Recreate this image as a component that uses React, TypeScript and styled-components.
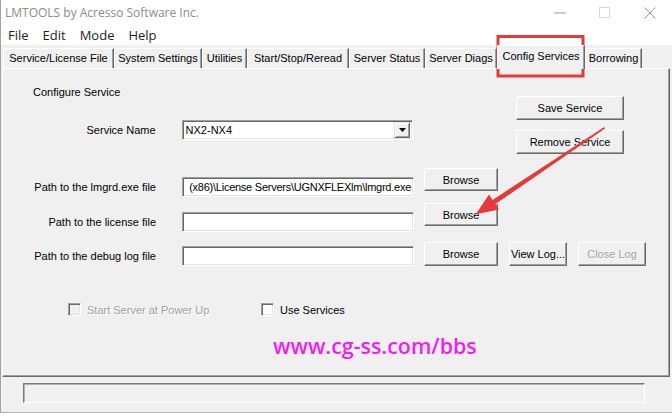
import styled, { createGlobalStyle, css } from "styled-components";

const GlobalStyle = createGlobalStyle`
  body {
    margin: 0;
    background: #ffffff;
    font-family: "Liberation Sans", Arial, sans-serif;
  }
`;

const Window = styled.div`
  position: relative;
  width: 672px;
  height: 413px;
  box-sizing: border-box;
  border-left: 1px solid #a3a3a3;
  border-bottom: 1px solid #b4b4b4;
  background: #f0f0f0;
  display: flex;
  flex-direction: column;
`;

const TitleBar = styled.div`
  height: 25px;
  background: #ffffff;
  display: flex;
  align-items: center;
  padding-left: 4px;
`;

const Title = styled.span`
  font-family: "Open Sans", sans-serif;
  font-size: 12px;
  color: #8c8c8c;
`;

const Controls = styled.div`
  margin-left: auto;
  display: flex;
  height: 100%;
`;

const CaptionButton = styled.div`
  width: 45px;
  height: 100%;
  display: flex;
  align-items: center;
  justify-content: center;
`;

const MenuBar = styled.div`
  height: 20px;
  background: #ffffff;
  display: flex;
`;

const MenuItem = styled.span`
  padding: 0 7px;
  font-family: "Open Sans", sans-serif;
  font-size: 13px;
  line-height: 20px;
  color: #1e1e1e;
`;

const TabStrip = styled.div`
  height: 23px;
  display: flex;
  align-items: flex-end;
  padding-left: 2px;
`;

const Tab = styled.div<{ $w: number; $active?: boolean }>`
  width: ${(p) => p.$w}px;
  height: 20px;
  box-sizing: border-box;
  border-top: 1px solid #ffffff;
  border-left: 1px solid #ffffff;
  border-right: 1px solid #696969;
  box-shadow: inset -1px 0 #a0a0a0;
  font-size: 11px;
  line-height: 19px;
  text-align: center;
  white-space: nowrap;
  color: #000;
  ${(p) =>
    p.$active &&
    css`
      height: 24px;
      margin-bottom: -1px;
      line-height: 21px;
      background: #f0f0f0;
      position: relative;
      z-index: 1;
    `}
`;

const Panel = styled.div`
  height: 309px;
  box-sizing: border-box;
  margin: 0 2px 0 1px;
  border-top: 1px solid #ffffff;
  border-left: 1px solid #ffffff;
  border-right: 1px solid #696969;
  border-bottom: 1px solid #696969;
  box-shadow: inset -1px -1px #a0a0a0;
  display: flex;
  flex-direction: column;
  font-size: 11px;
  color: #000;
`;

const TopSection = styled.div`
  display: flex;
  align-items: flex-start;
`;

const TopLeft = styled.div`
  width: 410px;
  display: flex;
  flex-direction: column;
`;

const GroupTitle = styled.div`
  margin: 16px 0 0 30px;
  line-height: 14px;
`;

const Row = styled.div<{ $top: number }>`
  display: flex;
  align-items: flex-start;
  margin-top: ${(p) => p.$top}px;
`;

const Label = styled.div<{ $offset?: number }>`
  width: 153px;
  text-align: right;
  line-height: 20px;
  margin-top: ${(p) => p.$offset ?? 0}px;
  white-space: nowrap;
`;

const sunken = css`
  box-sizing: border-box;
  border-top: 1px solid #a0a0a0;
  border-left: 1px solid #a0a0a0;
  border-bottom: 1px solid #ffffff;
  border-right: 1px solid #ffffff;
  box-shadow: inset 1px 1px #696969, inset -1px -1px #e3e3e3;
`;

const Field = styled.div<{ $offset?: number }>`
  ${sunken};
  width: 232px;
  height: 20px;
  margin-left: 26px;
  margin-top: ${(p) => p.$offset ?? 0}px;
  background: #ffffff;
  display: flex;
  justify-content: flex-end;
  align-items: center;
  overflow: hidden;
  white-space: nowrap;
  padding: 0 2px;
  line-height: 16px;
  letter-spacing: -0.25px;
`;

const Combo = styled(Field)`
  justify-content: flex-start;
  padding: 2px 2px 2px 3px;
  letter-spacing: 0;
`;

const ComboText = styled.span`
  flex: 1;
`;

const DropButton = styled.div`
  width: 16px;
  height: 16px;
  box-sizing: border-box;
  background: #f0f0f0;
  border-top: 1px solid #e3e3e3;
  border-left: 1px solid #e3e3e3;
  border-right: 1px solid #696969;
  border-bottom: 1px solid #696969;
  box-shadow: inset 1px 1px #fff, inset -1px -1px #a0a0a0;
  display: flex;
  align-items: center;
  justify-content: center;
`;

const Button = styled.div<{ $w: number; $h?: number; $gap?: number; $disabled?: boolean }>`
  width: ${(p) => p.$w}px;
  height: ${(p) => p.$h ?? 23}px;
  margin-left: ${(p) => p.$gap ?? 0}px;
  box-sizing: border-box;
  background: #f0f0f0;
  border-top: 1px solid #ffffff;
  border-left: 1px solid #ffffff;
  border-right: 1px solid #696969;
  border-bottom: 1px solid #696969;
  box-shadow: inset -1px -1px #a0a0a0;
  display: flex;
  align-items: center;
  justify-content: center;
  white-space: nowrap;
  color: ${(p) => (p.$disabled ? "#a0a0a0" : "#000")};
  text-shadow: ${(p) => (p.$disabled ? "1px 1px #ffffff" : "none")};
`;

const ButtonStack = styled.div`
  display: flex;
  flex-direction: column;
  gap: 10px;
  margin: 27px 0 0 103px;
`;

const CheckRow = styled.div`
  display: flex;
  align-items: center;
  margin: 37px 0 0 65px;
`;

const CheckItem = styled.label<{ $w?: number; $disabled?: boolean }>`
  display: flex;
  align-items: center;
  gap: 6px;
  width: ${(p) => (p.$w ? `${p.$w}px` : "auto")};
  color: ${(p) => (p.$disabled ? "#a0a0a0" : "#000")};
  text-shadow: ${(p) => (p.$disabled ? "1px 1px #ffffff" : "none")};
`;

const Box = styled.span<{ $disabled?: boolean }>`
  ${sunken};
  width: 13px;
  height: 13px;
  background: ${(p) => (p.$disabled ? "#f0f0f0" : "#ffffff")};
`;

const Watermark = styled.div`
  margin: 15px 0 0 270px;
  font-family: "Open Sans", sans-serif;
  font-weight: 600;
  font-size: 21.4px;
  line-height: 30px;
  color: #f01ef0;
`;

const StatusArea = styled.div`
  flex: 1;
  padding: 6px 0 0 22px;
`;

const StatusField = styled.div`
  width: 622px;
  height: 20px;
  box-sizing: border-box;
  border-top: 1px solid #7a7a7a;
  border-left: 1px solid #7a7a7a;
  border-bottom: 1px solid #ffffff;
  border-right: 1px solid #ffffff;
  box-shadow: inset 1px 1px #b0b0b0;
`;

const Overlay = styled.svg`
  position: absolute;
  left: -1px;
  top: 0;
  pointer-events: none;
`;

const tabs = [
  { label: "Service/License File", w: 111 },
  { label: "System Settings", w: 88 },
  { label: "Utilities", w: 45 },
  { label: "Start/Stop/Reread", w: 102 },
  { label: "Server Status", w: 76 },
  { label: "Server Diags", w: 72 },
  { label: "Config Services", w: 88, active: true },
  { label: "Borrowing", w: 57 },
];

export default function App() {
  return (
    <>
      <GlobalStyle />
      <Window>
        <TitleBar>
          <Title>LMTOOLS by Acresso Software Inc.</Title>
          <Controls>
            <CaptionButton>
              <svg width="12" height="2" viewBox="0 0 12 2">
                <line x1="0" y1="1" x2="12" y2="1" stroke="#9a9a9a" strokeWidth="1" />
              </svg>
            </CaptionButton>
            <CaptionButton>
              <svg width="11" height="11" viewBox="0 0 11 11">
                <rect x="0.5" y="0.5" width="10" height="10" fill="none" stroke="#d8d8d8" />
              </svg>
            </CaptionButton>
            <CaptionButton>
              <svg width="12" height="12" viewBox="0 0 12 12">
                <path d="M0.5 0.5 L11.5 11.5 M11.5 0.5 L0.5 11.5" stroke="#9a9a9a" strokeWidth="1" />
              </svg>
            </CaptionButton>
          </Controls>
        </TitleBar>
        <MenuBar>
          {["File", "Edit", "Mode", "Help"].map((m) => (
            <MenuItem key={m}>{m}</MenuItem>
          ))}
        </MenuBar>
        <TabStrip>
          {tabs.map((t) => (
            <Tab key={t.label} $w={t.w} $active={t.active}>
              {t.label}
            </Tab>
          ))}
        </TabStrip>
        <Panel>
          <TopSection>
            <TopLeft>
              <GroupTitle>Configure Service</GroupTitle>
              <Row $top={21}>
                <Label>Service Name</Label>
                <Combo>
                  <ComboText>NX2-NX4</ComboText>
                  <DropButton>
                    <svg width="7" height="4" viewBox="0 0 7 4">
                      <path d="M0 0 H7 L3.5 4 Z" fill="#000" />
                    </svg>
                  </DropButton>
                </Combo>
              </Row>
            </TopLeft>
            <ButtonStack>
              <Button $w={108} $h={24}>Save Service</Button>
              <Button $w={108} $h={24}>Remove Service</Button>
            </ButtonStack>
          </TopSection>

          <Row $top={14}>
            <Label $offset={9}>Path to the lmgrd.exe file</Label>
            <Field $offset={9}>(x86)\License Servers\UGNXFLEXlm\lmgrd.exe</Field>
            <Button $w={74} $gap={10}>Browse</Button>
          </Row>
          <Row $top={6}>
            <Label $offset={9}>Path to the license file</Label>
            <Field $offset={9} />
            <Button $w={74} $gap={10}>Browse</Button>
          </Row>
          <Row $top={10}>
            <Label $offset={4}>Path to the debug log file</Label>
            <Field $offset={4} />
            <Button $w={74} $h={24} $gap={10}>Browse</Button>
            <Button $w={58} $h={24} $gap={11}>View Log...</Button>
            <Button $w={68} $h={24} $gap={11} $disabled>Close Log</Button>
          </Row>

          <CheckRow>
            <CheckItem $w={193} $disabled>
              <Box $disabled />
              Start Server at Power Up
            </CheckItem>
            <CheckItem>
              <Box />
              Use Services
            </CheckItem>
          </CheckRow>

          <Watermark>www.cg-ss.com/bbs</Watermark>
        </Panel>
        <StatusArea>
          <StatusField />
        </StatusArea>

        <Overlay width="672" height="417" viewBox="0 0 672 417">
          <rect x="498" y="36.5" width="85" height="39.5" fill="none" stroke="#e23a3d" strokeWidth="3" />
          <polygon
            points="604.3,127 605,128.4 495.4,204.1 499,209.5 475.8,214.3 489,194.5 492.6,199.9"
            fill="#e8393a"
          />
        </Overlay>
      </Window>
    </>
  );
}
